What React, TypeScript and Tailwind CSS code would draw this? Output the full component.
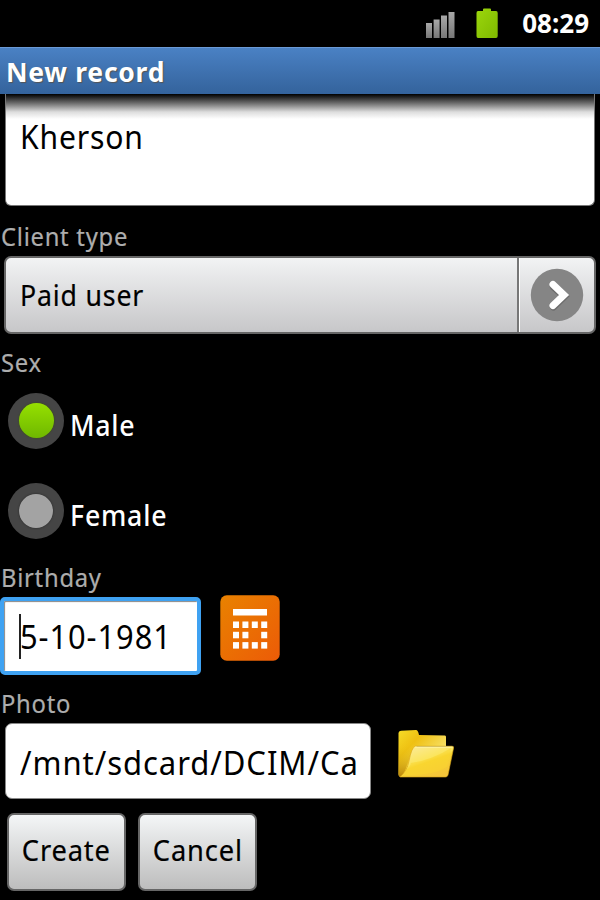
import React, { useState } from 'react';

interface FieldLabelProps {
  children: React.ReactNode;
  className: string;
}

const FieldLabel: React.FC<FieldLabelProps> = ({ children, className }) => (
  <div className={`flex items-start pl-px text-[26px] leading-8 text-[#adadad] [-webkit-text-stroke:0.2px_#adadad] ${className}`}>
    <span className="origin-left scale-x-[0.915] tracking-[0.8px] whitespace-nowrap">{children}</span>
  </div>
);

interface RadioOptionProps {
  label: string;
  checked: boolean;
  onSelect: () => void;
}

const RadioOption: React.FC<RadioOptionProps> = ({ label, checked, onSelect }) => (
  <button
    type="button"
    role="radio"
    aria-checked={checked}
    onClick={onSelect}
    className="flex h-[90px] w-full items-center pl-2 text-left"
  >
    <span className="flex size-14 shrink-0 items-center justify-center rounded-full bg-[#454545] pb-px">
      <span
        className={
          checked
            ? 'size-[35px] rounded-full bg-linear-to-b from-[#96e000] to-[#6fb800] shadow-[0_0_2px_#3a5500]'
            : 'size-[34px] rounded-full bg-[#a3a3a3] shadow-[0_0_2px_#222]'
        }
      />
    </span>
    <span className="mt-[7px] ml-[6px] origin-left scale-x-[0.955] text-[28px] leading-9 font-medium tracking-[0.8px] text-white">
      {label}
    </span>
  </button>
);

// Signal strength, four rising bars
const SignalIcon = () => (
  <svg width="30" height="28" viewBox="0 0 30 28">
    <defs>
      <linearGradient id="bar" x1="0" y1="0" x2="0" y2="1">
        <stop offset="0" stopColor="#a8a8a8" />
        <stop offset="1" stopColor="#777" />
      </linearGradient>
    </defs>
    <rect x="1" y="12" width="6" height="15" fill="url(#bar)" />
    <rect x="8.6" y="8.5" width="6" height="18.5" fill="url(#bar)" />
    <rect x="16" y="4.5" width="6" height="22.5" fill="url(#bar)" />
    <rect x="23.5" y="1" width="6" height="26" fill="url(#bar)" />
  </svg>
);

const BatteryIcon = () => (
  <svg width="22" height="31" viewBox="0 0 22 31">
    <defs>
      <linearGradient id="battery" x1="0" y1="0" x2="1" y2="1">
        <stop offset="0" stopColor="#9bd60c" />
        <stop offset="1" stopColor="#7fb900" />
      </linearGradient>
    </defs>
    <path
      d="M7 1.5Q7 .5 8 .5H14Q15 .5 15 1.5V3H20Q21.7 3 21.7 5V28Q21.7 30 20 30H2Q.5 30 .5 28V5Q.5 3 2 3H7Z"
      fill="url(#battery)"
    />
  </svg>
);

const ArrowIcon = () => (
  <svg width="54" height="54" viewBox="0 0 54 54">
    <circle cx="27" cy="27" r="26.2" fill="#858585" />
    <path d="M23.5 19L34.5 28.5L23.5 39" fill="none" stroke="#555" strokeWidth="7" strokeLinecap="round" opacity=".5" />
    <path d="M23 16.5L34 27L23 37.5" fill="none" stroke="#fff" strokeWidth="7" strokeLinecap="round" strokeLinejoin="miter" />
  </svg>
);

// Grid cells of the date picker icon, the third one of the second row is empty
const cells = [
  [0, 0], [1, 0], [2, 0], [3, 0],
  [0, 1], [1, 1], [3, 1],
  [0, 2], [1, 2], [2, 2], [3, 2],
];

const CalendarIcon = () => (
  <svg width="60" height="66" viewBox="0 0 60 66">
    <defs>
      <linearGradient id="orange" x1="0" y1="0" x2="1" y2="1">
        <stop offset="0" stopColor="#e98200" />
        <stop offset="1" stopColor="#ec5b07" />
      </linearGradient>
    </defs>
    <rect x=".3" y=".3" width="59.4" height="65.4" rx="6.5" fill="url(#orange)" />
    <rect x="13" y="14" width="34" height="6.5" fill="#fff" />
    {cells.map(([col, row]) => (
      <rect
        key={`${col}-${row}`}
        x={13 + col * 9.4}
        y={26.5 + row * 10.3}
        width="6"
        height="6.5"
        fill="#fff"
      />
    ))}
  </svg>
);

const FolderIcon = () => (
  <svg width="58" height="50" viewBox="0 0 58 50">
    <defs>
      <linearGradient id="folderBack" x1="0" y1="0" x2=".75" y2=".7">
        <stop offset="0" stopColor="#f6dc28" />
        <stop offset=".4" stopColor="#efc012" />
        <stop offset="1" stopColor="#f8e36e" />
      </linearGradient>
      <linearGradient id="folderSide" x1="0" y1="0" x2="0" y2="1">
        <stop offset="0" stopColor="#f5d51c" stopOpacity="0" />
        <stop offset="1" stopColor="#b98408" />
      </linearGradient>
      <linearGradient id="folderFront" gradientUnits="userSpaceOnUse" x1="27" y1="17" x2="38" y2="48">
        <stop offset="0" stopColor="#fbe98a" />
        <stop offset=".4" stopColor="#fbe55c" />
        <stop offset=".5" stopColor="#f8d530" />
        <stop offset="1" stopColor="#f4c53a" />
      </linearGradient>
    </defs>
    <path d="M1.5 4Q1.5 2 4 1.7L19 1Q21 1 22 6L48 6.5Q49 6.5 49 8V17H20L6 48H4Q1.5 48 1.5 45Z" fill="url(#folderBack)" />
    <path d="M1.5 12H18L6 48H4Q1.5 48 1.5 45Z" fill="url(#folderSide)" />
    <path d="M18 17.2H55Q57 17.2 56.6 19L51 46Q50.4 48 48.5 48H3Q10 42 12 32Q14.5 19 18 17.2Z" fill="url(#folderFront)" stroke="#dba617" strokeWidth=".6" />
    <path d="M14 34Q35 31 54 19L50 38Q35 47 8 46Q12 41 14 34Z" fill="#f9d52f" opacity=".55" />
    <path d="M18 18.2H55.5" stroke="#fff4a5" strokeWidth="1" />
  </svg>
);

const App: React.FC = () => {
  const [sex, setSex] = useState('Male');

  return (
    <div className="h-[900px] w-[600px] overflow-hidden bg-black font-['Noto_Sans','Open_Sans',sans-serif] text-black">
      <header className="flex h-[47px] items-start justify-end pr-[11px] text-white">
        <div className="mt-[11px] mr-[21px]"><SignalIcon /></div>
        <div className="mt-2 mr-[24px]"><BatteryIcon /></div>
        <div className="mt-[5px] text-[26px] leading-9 font-bold">08:29</div>
      </header>

      <div className="flex h-[47px] items-center border-t border-[#6b9ad6] bg-linear-to-b from-[#4a81c4] to-[#34639c] pt-px pl-[6px]">
        <h1 className="origin-left scale-x-[1.02] text-[26px] leading-9 font-bold tracking-[0.7px] text-white [text-shadow:1px_1px_1px_#555]">
          New record
        </h1>
      </div>

      <main>
        <div className="mx-[5px] h-28 rounded-b-md border border-t-0 border-[#777] bg-[linear-gradient(to_bottom,#000_0,#222_3px,#777_10px,#ddd_18px,#fff_25px)] pt-[21px] pl-[14px]">
          <div className="origin-left scale-x-[0.94] text-[32px] leading-[44px] tracking-[0.9px]">Kherson</div>
        </div>

        <FieldLabel className="h-[50px] pt-[14px]">Client type</FieldLabel>
        <div className="mx-1 flex h-[78px] overflow-hidden rounded-[7px] border-2 border-[#666] bg-linear-to-b from-[#f2f3f4] to-[#c7c7c9]">
          <div className="flex flex-1 items-center border-r-2 border-[#777] pl-[14px]">
            <span className="origin-left scale-x-[0.92] text-[29px] leading-10 tracking-[0.9px] [-webkit-text-stroke:0.2px_black]">Paid user</span>
          </div>
          <div className="flex w-[75px] items-center justify-center border-l border-white">
            <ArrowIcon />
          </div>
        </div>

        <FieldLabel className="h-[42px] pt-3">Sex</FieldLabel>
        <div role="radiogroup">
          {['Male', 'Female'].map((option) => (
            <RadioOption
              key={option}
              label={option}
              checked={sex === option}
              onSelect={() => setSex(option)}
            />
          ))}
        </div>

        <FieldLabel className="h-[41px] pt-[5px]">Birthday</FieldLabel>
        <div className="flex h-[78px] items-start">
          <div className="flex h-[78px] w-[201px] items-center rounded-[5px] border-4 border-[#3fa2f2] bg-white pl-[15px] shadow-[inset_1px_1px_1px_#888]">
            <span className="h-[45px] w-[2px] shrink-0 bg-[#222]" />
            <span className="mt-[2px] -ml-px origin-left scale-x-[0.935] text-[33px] leading-10 tracking-[1px] whitespace-nowrap">5-10-1981</span>
          </div>
          <div className="-mt-[2px] ml-[19px]"><CalendarIcon /></div>
        </div>

        <FieldLabel className="h-12 pt-3">Photo</FieldLabel>
        <div className="flex h-[76px] items-start">
          <div className="ml-[5px] flex h-[76px] w-[366px] items-center rounded-[7px] border border-[#888] bg-white pl-[14px]">
            <span className="mt-[3px] origin-left scale-x-[0.94] text-[33px] leading-10 tracking-[1px] whitespace-nowrap">/mnt/sdcard/DCIM/Ca</span>
          </div>
          <div className="mt-[6px] ml-[26px]"><FolderIcon /></div>
        </div>

        <div className="mt-[14px] flex gap-3 pl-[7px]">
          {['Create', 'Cancel'].map((action) => (
            <button
              key={action}
              type="button"
              className="flex h-[78px] w-[119px] items-center justify-center rounded-[7px] border-2 border-[#666] bg-linear-to-b from-[#f4f6f7] to-[#bdbdbd]"
            >
              <span className="-mt-1 scale-x-[0.94] text-[29px] leading-10 tracking-[0.9px] [-webkit-text-stroke:0.2px_black]">{action}</span>
            </button>
          ))}
        </div>
      </main>
    </div>
  );
};

export default App;
